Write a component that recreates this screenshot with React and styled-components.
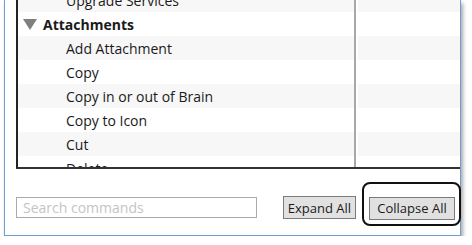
import React from "react";
import styled, { createGlobalStyle } from "styled-components";

const GlobalStyle = createGlobalStyle`
  html, body {
    margin: 0;
    background: #ffffff;
    overflow: hidden;
  }
  body {
    font-family: "Open Sans", "Noto Sans", sans-serif;
  }
`;

// Rows as they sit in the scrolled list
const rows = [
  { label: "Upgrade Services", level: 1 },
  { label: "Attachments", level: 0 },
  { label: "Add Attachment", level: 1 },
  { label: "Copy", level: 1 },
  { label: "Copy in or out of Brain", level: 1 },
  { label: "Copy to Icon", level: 1 },
  { label: "Cut", level: 1 },
  { label: "Delete", level: 1 },
];

const App = () => {
  return (
    <>
      <GlobalStyle />
      <Window>
        <ListBox>
          <Rows>
            {rows.map((row, i) => (
              <Row key={row.label}>
                <NameCell $striped={i % 2 === 0} $level={row.level}>
                  {row.level === 0 && <Caret />}
                  <Label $bold={row.level === 0}>{row.label}</Label>
                </NameCell>
                <ValueCell $striped={i % 2 === 0} />
              </Row>
            ))}
          </Rows>
        </ListBox>
        <Footer>
          <SearchInput placeholder="Search commands" />
          <Button $width={73}>Expand All</Button>
          <Highlighted>
            <Button $width={86}>Collapse All</Button>
          </Highlighted>
        </Footer>
      </Window>
    </>
  );
};

const Window = styled.div`
  margin-left: 4px;
  width: 455px;
  height: 235px;
  background: #ffffff;
  border: 1px solid #6f9fd2;
  border-top: none;
  box-shadow: 2px 3px 4px rgba(0, 0, 0, 0.35);
  display: flex;
  flex-direction: column;
`;

const ListBox = styled.div`
  margin-left: 11px;
  height: 167px;
  border-left: 2px solid #222;
  border-bottom: 2px solid #333;
  overflow: hidden;
`;

const Rows = styled.div`
  margin-top: -12px;
`;

const Row = styled.div`
  display: grid;
  grid-template-columns: 336px 102px;
  column-gap: 4px;
  height: 24px;
`;

const NameCell = styled.div`
  display: flex;
  align-items: center;
  padding-left: ${(p) => (p.$level === 0 ? 5 : 48)}px;
  background: ${(p) => (p.$striped ? "#f7f7f7" : "#ffffff")};
`;

const ValueCell = styled.div`
  position: relative;
  background: ${(p) => (p.$striped ? "#f7f7f7" : "#ffffff")};

  &::before {
    content: "";
    position: absolute;
    left: -4px;
    top: 0;
    bottom: 0;
    width: 2px;
    background: #a8a8a8;
  }
`;

const Caret = styled.span`
  width: 0;
  height: 0;
  border-left: 7px solid transparent;
  border-right: 7px solid transparent;
  border-top: 11px solid #808080;
  margin-right: 6px;
`;

const Label = styled.span`
  font-size: 14px;
  font-weight: ${(p) => (p.$bold ? 700 : 400)};
  color: #1a1a1a;
  white-space: nowrap;
`;

const Footer = styled.div`
  flex: 1;
  display: flex;
  align-items: flex-start;
  padding-top: 27px;
  padding-left: 11px;
`;

const SearchInput = styled.input`
  box-sizing: border-box;
  width: 241px;
  height: 21px;
  margin-top: 1px;
  border: 1px solid #ababab;
  padding: 0 6px;
  font-family: "Open Sans", "Noto Sans", sans-serif;
  font-size: 14px;
  outline: none;

  &::placeholder {
    color: #c4c4c4;
  }
`;

const Button = styled.button`
  box-sizing: border-box;
  width: ${(p) => p.$width}px;
  height: 23px;
  padding: 0;
  background: #e1e1e1;
  border: 1px solid #7a7a7a;
  font-family: "Open Sans", "Noto Sans", sans-serif;
  font-size: 13px;
  color: #1a1a1a;
  margin-left: 26px;
`;

const Highlighted = styled.div`
  position: relative;

  ${Button} {
    margin-left: 13px;
  }

  &::after {
    content: "";
    position: absolute;
    left: 6px;
    top: -14px;
    width: 99px;
    height: 44px;
    box-sizing: border-box;
    border: 2px solid #111;
    border-radius: 8px;
    pointer-events: none;
  }
`;

export default App;
